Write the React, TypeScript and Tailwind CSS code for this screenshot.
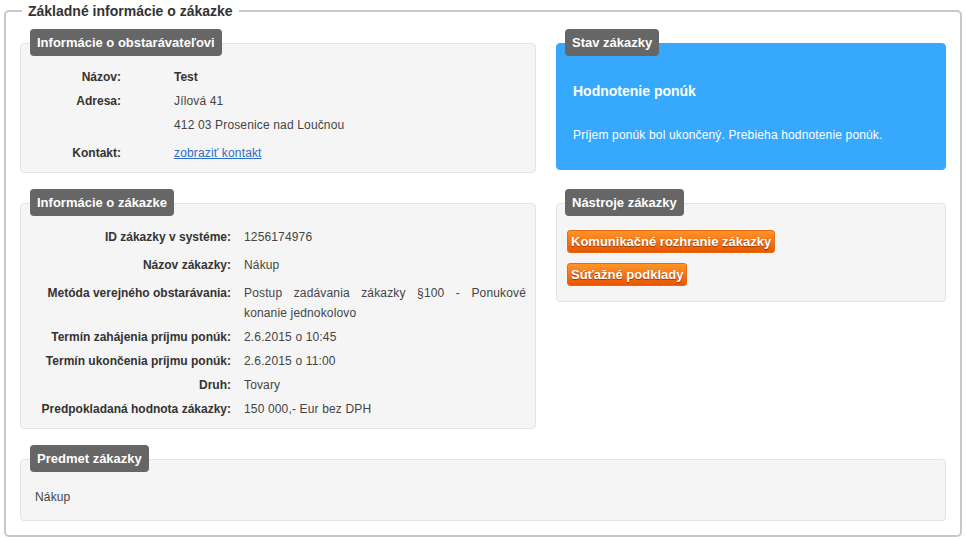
import React from 'react';

const Tab: React.FC<{ children: React.ReactNode; className?: string }> = ({ children, className = '' }) => (
  <div
    className={`relative z-10 w-fit h-[27px] rounded-[4px] bg-[#666666] px-[7px] text-[13px] font-bold leading-[27px] text-white ${className}`}
  >
    {children}
  </div>
);

const Panel: React.FC<{ children: React.ReactNode; className?: string }> = ({ children, className = '' }) => (
  <div className={`-mt-[13px] rounded-[4px] border border-[#e3e3e3] bg-[#f5f5f5] ${className}`}>{children}</div>
);

const OrangeButton: React.FC<{ children: React.ReactNode; className?: string }> = ({ children, className = '' }) => (
  <button
    type="button"
    className={`block h-[23px] w-fit rounded-[3px] border border-[#e86a10] bg-linear-to-b from-[#ff9427] to-[#ea5500] px-[3px] text-[13px] font-bold leading-[21px] text-white [text-shadow:0_1px_1px_rgba(0,0,0,0.45)] ${className}`}
  >
    {children}
  </button>
);

const orderRows: { label: string; value: string; extra?: string }[] = [
  { label: 'ID zákazky v systéme:', value: '1256174976', extra: 'mb-[4px]' },
  { label: 'Názov zákazky:', value: 'Nákup', extra: 'mb-[4px]' },
  { label: 'Metóda verejného obstarávania:', value: 'Postup zadávania zákazky §100 - Ponukové konanie jednokolovo' },
  { label: 'Termín zahájenia príjmu ponúk:', value: '2.6.2015 o 10:45' },
  { label: 'Termín ukončenia príjmu ponúk:', value: '2.6.2015 o 11:00' },
  { label: 'Druh:', value: 'Tovary' },
  { label: 'Predpokladaná hodnota zákazky:', value: '150 000,- Eur bez DPH' },
];

export default function App() {
  return (
    <div className="w-[966px] h-[541px] bg-white px-[4px] pb-[4px] font-['Liberation_Sans',Arial,sans-serif] text-[12px] text-[#444]">
      <fieldset className="rounded-[5px] border-2 border-[#c8c8c8] px-[14px] pb-[14px] pt-[7px]">
        <legend className="ml-[2px] px-[6px] text-[14px] font-bold leading-[22px] text-[#333]">
          Základné informácie o zákazke
        </legend>

        <div className="flex gap-[20px]">
          {/* left column */}
          <div className="w-[516px] shrink-0">
            <Tab className="ml-[10px]">Informácie o obstarávateľovi</Tab>
            <Panel className="pt-[21px] pb-[7px]">
              <div className="flex leading-[24px]">
                <div className="w-[100px] shrink-0 text-right font-bold text-[#333]">Názov:</div>
                <div className="ml-[53px] font-bold text-[#333]">Test</div>
              </div>
              <div className="flex leading-[24px]">
                <div className="w-[100px] shrink-0 text-right font-bold text-[#333]">Adresa:</div>
                <div className="ml-[53px] tracking-[0.15px]">
                  <div>Jílová 41</div>
                  <div>412 03 Prosenice nad Loučnou</div>
                </div>
              </div>
              <div className="mt-[4px] flex leading-[24px]">
                <div className="w-[100px] shrink-0 text-right font-bold text-[#333]">Kontakt:</div>
                <a href="#" className="ml-[53px] tracking-[0.15px] text-[#2a6fc4] underline">
                  zobraziť kontakt
                </a>
              </div>
            </Panel>

            <Tab className="ml-[10px] mt-[16px]">Informácie o zákazke</Tab>
            <Panel className="pt-[21px] pb-[7px]">
              {orderRows.map((r) => (
                <div key={r.label} className={`flex py-[2px] leading-[20px] ${r.extra ?? ''}`}>
                  <div className="w-[210px] shrink-0 text-right font-bold text-[#333]">{r.label}</div>
                  <div className="ml-[13px] w-[282px] text-justify tracking-[0.15px]">{r.value}</div>
                </div>
              ))}
            </Panel>
          </div>

          {/* right column */}
          <div className="w-[390px] shrink-0">
            <Tab className="ml-[9px]">Stav zákazky</Tab>
            <div className="-mt-[13px] rounded-[4px] border border-[#36a9ff] bg-[#36a9ff] px-[16px] pt-[37px] pb-[24px] text-white">
              <div className="text-[14px] font-bold leading-[20px]">Hodnotenie ponúk</div>
              <div className="mt-[24px] leading-[20px] tracking-[0.15px]">
                Príjem ponúk bol ukončený. Prebieha hodnotenie ponúk.
              </div>
            </div>

            <Tab className="ml-[9px] mt-[19px]">Nástroje zákazky</Tab>
            <Panel className="px-[10px] pt-[26px] pb-[15px]">
              <OrangeButton>Komunikačné rozhranie zákazky</OrangeButton>
              <OrangeButton className="mt-[10px]">Súťažné podklady</OrangeButton>
            </Panel>
          </div>
        </div>

        <Tab className="ml-[10px] mt-[16px]">Predmet zákazky</Tab>
        <Panel className="px-[14px] pt-[27px] pb-[13px]">
          <div className="leading-[20px] tracking-[0.15px]">Nákup</div>
        </Panel>
      </fieldset>
    </div>
  );
}
